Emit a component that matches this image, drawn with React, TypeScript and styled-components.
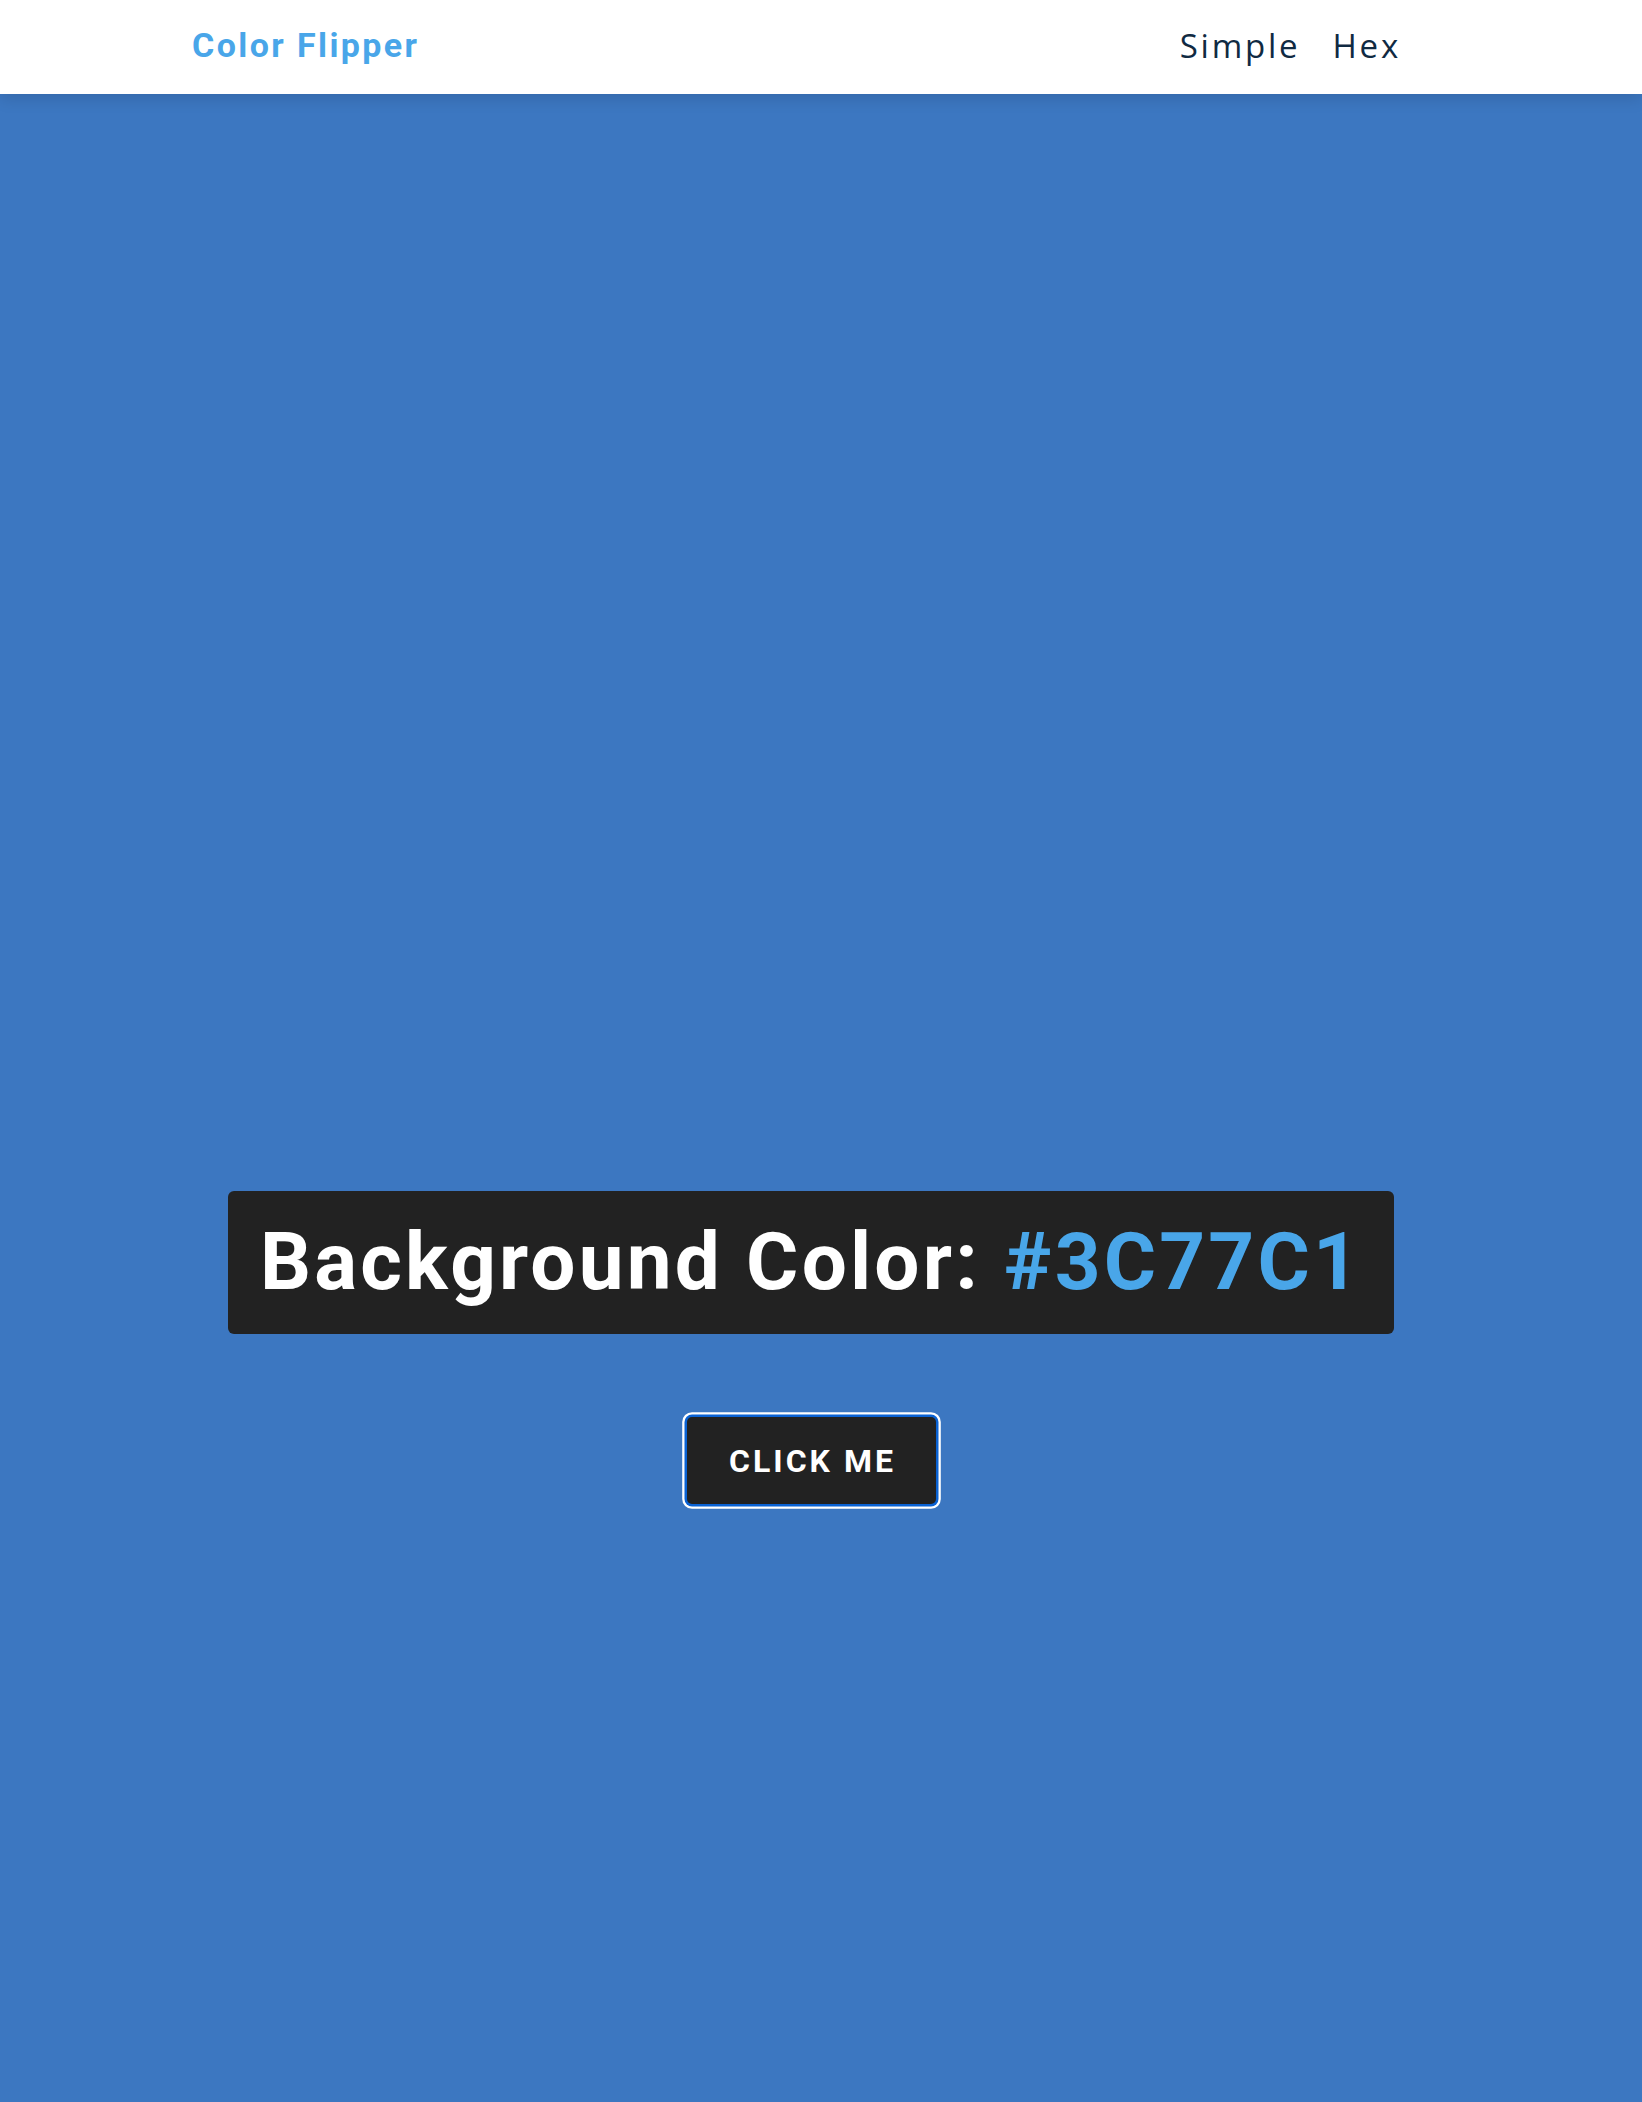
import React from "react";
import styled, { createGlobalStyle } from "styled-components";

const GlobalStyle = createGlobalStyle`
  * { box-sizing: border-box; }
  html, body { margin: 0; padding: 0; }
  body {
    background: #3c77c1;
    font-family: Roboto, "Open Sans", sans-serif;
    min-height: 2102px;
  }
`;

const Nav = styled.nav`
  height: 94px;
  background: #ffffff;
  box-shadow: 0 5px 15px rgba(0, 0, 0, 0.12);
  display: flex;
  align-items: center;
  justify-content: space-between;
  padding: 0 241px 4px 192px;
  position: relative;
  z-index: 1;
`;

const Logo = styled.h4`
  margin: 0;
  font-family: Roboto, sans-serif;
  font-weight: 700;
  font-size: 34px;
  letter-spacing: 2.4px;
  color: #49a6e9;
`;

const Links = styled.ul`
  list-style: none;
  margin: 0;
  padding: 0;
  display: flex;
  gap: 32px;
`;

const LinkItem = styled.li`
  font-family: "Open Sans", sans-serif;
  font-size: 33px;
  letter-spacing: 2.8px;
  color: #102a42;
`;

const Main = styled.main`
  display: flex;
  flex-direction: column;
  align-items: center;
  padding: 1097px 20px 0 0;
`;

const Heading = styled.h2`
  margin: 0;
  background: #222222;
  border-radius: 6px;
  padding: 21px 32px 22px;
  font-family: Roboto, sans-serif;
  font-weight: 700;
  font-size: 80px;
  line-height: 100px;
  letter-spacing: 3.2px;
  color: #ffffff;
  white-space: nowrap;
`;

const Accent = styled.span`
  color: #49a6e9;
`;

const Button = styled.button`
  margin-top: 83px;
  width: 249px;
  height: 87px;
  background: #222222;
  color: #ffffff;
  border: none;
  border-radius: 5px;
  font-family: Roboto, sans-serif;
  font-weight: 700;
  font-size: 32px;
  letter-spacing: 3px;
  text-transform: uppercase;
  box-shadow: 0 0 0 2.5px #0a62d3, 0 0 0 4.8px #ffffff;
  cursor: pointer;
  padding: 0 0 0 3px;
`;

export default function App() {
  return (
    <>
      <GlobalStyle />
      <Nav>
        <Logo>Color Flipper</Logo>
        <Links>
          <LinkItem>Simple</LinkItem>
          <LinkItem>Hex</LinkItem>
        </Links>
      </Nav>
      <Main>
        <Heading>
          Background Color: <Accent>#3C77C1</Accent>
        </Heading>
        <Button>click me</Button>
      </Main>
    </>
  );
}
